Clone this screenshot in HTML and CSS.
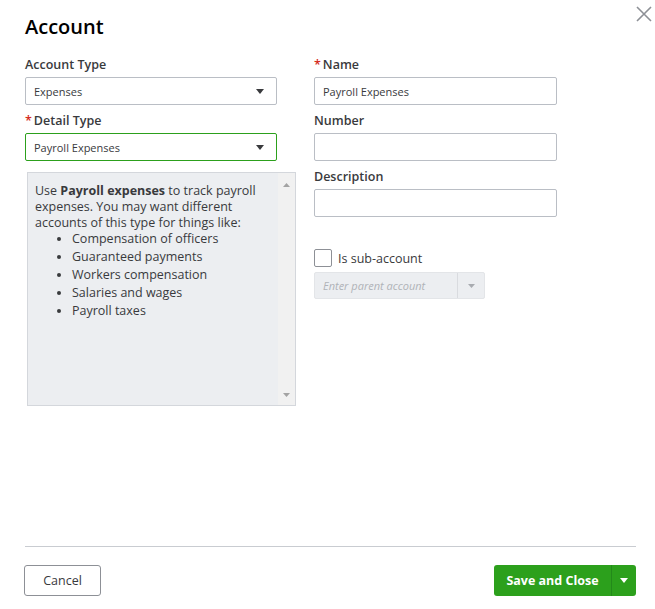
FILE: index.html
```html
<!DOCTYPE html>
<html lang="en">
<head>
    <meta charset="UTF-8">
    <meta name="viewport" content="width=device-width, initial-scale=1.0">
    <title>Account</title>
    <link rel="stylesheet" href="styles.css">
</head>
<body>
    <div class="dialog">
        <button class="close" aria-label="Close">
            <svg width="16" height="16" viewBox="0 0 16 16"><path d="M1 1 L15 15 M15 1 L1 15" stroke="#8d9096" stroke-width="1.6" fill="none"/></svg>
        </button>
        <h1 class="title">Account</h1>

        <div class="form">
            <div class="col col-left">
                <label class="field-label">Account Type</label>
                <div class="select">
                    <span>Expenses</span>
                    <svg class="caret" width="8" height="5" viewBox="0 0 8 5"><path d="M0 0 H8 L4 5 Z" fill="#393a3d"/></svg>
                </div>

                <label class="field-label"><span class="req">*</span>Detail Type</label>
                <div class="select active">
                    <span>Payroll Expenses</span>
                    <svg class="caret" width="8" height="5" viewBox="0 0 8 5"><path d="M0 0 H8 L4 5 Z" fill="#393a3d"/></svg>
                </div>

                <div class="help">
                    <div class="help-text">
                        <p>Use <b>Payroll expenses</b> to track payroll expenses. You may want different accounts of this type for things like:</p>
                        <ul>
                            <li>Compensation of officers</li>
                            <li>Guaranteed payments</li>
                            <li>Workers compensation</li>
                            <li>Salaries and wages</li>
                            <li>Payroll taxes</li>
                        </ul>
                    </div>
                    <div class="scrollbar">
                        <svg width="7" height="4" viewBox="0 0 7 4"><path d="M0 4 H7 L3.5 0 Z" fill="#a3a3a3"/></svg>
                        <svg width="7" height="4" viewBox="0 0 7 4"><path d="M0 0 H7 L3.5 4 Z" fill="#a3a3a3"/></svg>
                    </div>
                </div>
            </div>

            <div class="col col-right">
                <label class="field-label"><span class="req">*</span>Name</label>
                <div class="input">Payroll Expenses</div>

                <label class="field-label">Number</label>
                <div class="input"></div>

                <label class="field-label">Description</label>
                <div class="input"></div>

                <div class="sub-account">
                    <span class="checkbox"></span>
                    <span>Is sub-account</span>
                </div>
                <div class="parent-select">
                    <span class="placeholder">Enter parent account</span>
                    <span class="parent-arrow">
                        <svg width="7" height="4" viewBox="0 0 7 4"><path d="M0 0 H7 L3.5 4 Z" fill="#a8abb0"/></svg>
                    </span>
                </div>
            </div>
        </div>

        <div class="footer">
            <button class="btn-cancel">Cancel</button>
            <div class="btn-save">
                <span class="save-label">Save and Close</span>
                <span class="save-menu">
                    <svg width="8" height="5" viewBox="0 0 8 5"><path d="M0 0 H8 L4 5 Z" fill="#fff"/></svg>
                </span>
            </div>
        </div>
    </div>
</body>
</html>
```

FILE: styles.css
```css
body {
    margin: 0;
    background: #fff;
    font-family: "Open Sans", "Noto Sans", Arial, sans-serif;
    color: #393a3d;
}
.dialog {
    position: relative;
    width: 655px;
    height: 609px;
    box-sizing: border-box;
    padding: 0 19px 13px 25px;
    display: flex;
    flex-direction: column;
}
.close {
    position: absolute;
    top: 6px;
    right: 3px;
    width: 16px;
    height: 16px;
    padding: 0;
    border: none;
    background: none;
    cursor: pointer;
}
.title {
    margin: 13px 0 0;
    font-size: 20px;
    font-weight: 600;
    line-height: 28px;
    color: #000;
}
.form {
    flex: 1;
    display: flex;
    margin-top: 16px;
}
.col {
    display: flex;
    flex-direction: column;
}
.col-left {
    width: 289px;
}
.col-right {
    width: 243px;
}
.field-label {
    display: block;
    font-size: 12.5px;
    font-weight: 600;
    line-height: 16px;
    margin: 8px 0 4px;
    color: #393a3d;
}
.col .field-label:first-child {
    margin-top: 0;
}
.req {
    color: #d52b1e;
    margin-right: 2px;
}
.select {
    width: 252px;
    height: 28px;
    box-sizing: border-box;
    border: 1px solid #babec5;
    border-radius: 2px;
    display: flex;
    align-items: center;
    justify-content: space-between;
    padding: 0 12px 0 8px;
    font-size: 11px;
}
.select.active {
    border-color: #2ca01c;
}
.help {
    margin: 11px 0 0 2px;
    width: 269px;
    height: 234px;
    box-sizing: border-box;
    border: 1px solid #d4d7dc;
    background: #eceef1;
    display: flex;
}
.help-text {
    flex: 1;
    padding: 10px 4px 0 7px;
    font-size: 12.5px;
    line-height: 16px;
}
.help-text p {
    margin: 0;
}
.help-text ul {
    margin: -1px 0 0;
    padding-left: 37px;
}
.help-text li {
    line-height: 18px;
}
.scrollbar {
    width: 17px;
    background: #f1f1f1;
    display: flex;
    flex-direction: column;
    justify-content: space-between;
    align-items: center;
    padding: 10px 0 8px;
}
.input {
    height: 28px;
    box-sizing: border-box;
    border: 1px solid #babec5;
    border-radius: 2px;
    display: flex;
    align-items: center;
    padding: 0 8px;
    font-size: 11px;
}
.sub-account {
    display: flex;
    align-items: center;
    gap: 6px;
    margin-top: 32px;
    font-size: 12.5px;
}
.checkbox {
    width: 18px;
    height: 18px;
    box-sizing: border-box;
    border: 1px solid #8d9096;
    border-radius: 2px;
    background: #fff;
}
.parent-select {
    margin-top: 5px;
    width: 171px;
    height: 27px;
    box-sizing: border-box;
    border: 1px solid #e3e5e8;
    border-radius: 2px;
    background: #eceef1;
    display: flex;
    align-items: center;
}
.placeholder {
    flex: 1;
    padding-left: 8px;
    font-size: 11px;
    font-style: italic;
    color: #b0b3b8;
}
.parent-arrow {
    width: 26px;
    height: 100%;
    border-left: 1px solid #d9dbdf;
    display: flex;
    align-items: center;
    justify-content: center;
}
.footer {
    border-top: 1px solid #c9ccd1;
    padding-top: 18px;
    display: flex;
    justify-content: space-between;
}
.btn-cancel {
    width: 77px;
    height: 31px;
    border: 1px solid #8d9096;
    border-radius: 3px;
    background: #fff;
    font-family: inherit;
    font-size: 12.5px;
    color: #393a3d;
    padding: 0;
    margin-left: -1px;
}
.btn-save {
    display: flex;
    height: 31px;
    width: 142px;
    border-radius: 3px;
    background: #2ca01c;
    color: #fff;
    font-size: 12.5px;
    font-weight: 700;
}
.save-label {
    flex: 1;
    display: flex;
    align-items: center;
    justify-content: center;
}
.save-menu {
    width: 24px;
    border-left: 1px solid #23891a;
    display: flex;
    align-items: center;
    justify-content: center;
}
```
